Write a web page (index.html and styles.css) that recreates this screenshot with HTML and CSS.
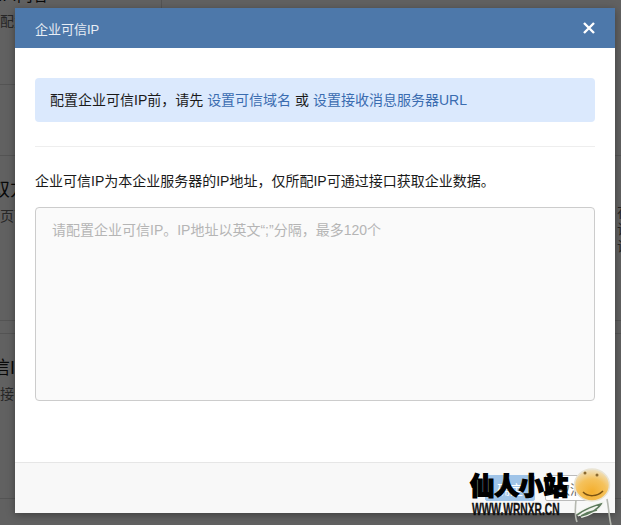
FILE: index.html
```html
<!DOCTYPE html>
<html lang="zh-CN">
  <head>
    <meta charset="utf-8">
    <title>企业可信IP</title>
    <link rel="stylesheet" href="styles.css">
  </head>
  <body>
    <div class="page">
      <div class="row row-top">
        <div class="cut-title">WIFI内容</div>
        <div class="row-sub">配置</div>
      </div>
      <div class="row row-gap"></div>
      <div class="row row-main">
        <div class="row-left">
          <div class="row-title">双方</div>
          <div class="row-sub">页面</div>
        </div>
        <div class="row-right">
          <div>在</div>
          <div>请</div>
          <div>设</div>
        </div>
      </div>
      <div class="row row-thin"></div>
      <div class="row row-main">
        <div class="row-left">
          <div class="row-title">信I</div>
          <div class="row-sub">接I</div>
        </div>
      </div>
    </div>

    <div class="mask"></div>

    <div class="dialog">
      <div class="dialog-head">
        <span class="dialog-title">企业可信IP</span>
        <svg class="close" width="12" height="12" viewBox="0 0 12 12">
          <path d="M1 1 L11 11 M11 1 L1 11" stroke="#fff" stroke-width="2.4" fill="none"/>
        </svg>
      </div>
      <div class="dialog-body">
        <div class="alert">配置企业可信IP前，请先 <a href="#">设置可信域名</a> 或 <a href="#">设置接收消息服务器URL</a></div>
        <div class="line"></div>
        <p class="desc">企业可信IP为本企业服务器的IP地址，仅所配IP可通过接口获取企业数据。</p>
        <textarea class="ip-input" placeholder="请配置企业可信IP。IP地址以英文“;”分隔，最多120个"></textarea>
      </div>
      <div class="dialog-foot">
        <button class="btn btn-ok">确定</button>
        <button class="btn">取消</button>
      </div>
    </div>

    <div class="mark">
      <div class="mark-name">仙人小站</div>
      <div class="mark-url">WWW.WRNXR.CN</div>
      <svg class="mark-face" width="42" height="60" viewBox="0 0 42 60">
        <defs>
          <radialGradient id="face" cx="0.5" cy="0.72" r="0.68">
            <stop offset="0" stop-color="#f4ae2c"/>
            <stop offset="0.6" stop-color="#f5c25c"/>
            <stop offset="1" stop-color="#efdfbb"/>
          </radialGradient>
        </defs>
        <path d="M4 33 C3 42 3 50 5 55 M35 32 C37 42 37 50 39 58" stroke="#b5b8b0" stroke-width="1.6" fill="none"/>
        <path d="M5 48 C13 42 24 38 29 37 C26 42 18 47 9 49 C14 46 20 44 25 43" stroke="#f2f4ee" stroke-width="4" fill="none"/>
        <path d="M5 48 C13 42 24 38 29 37 C26 42 18 47 9 49 C14 46 20 44 25 43" stroke="#5d7a5c" stroke-width="1.6" fill="none"/>
        <ellipse cx="20" cy="18" rx="17.5" ry="16" fill="url(#face)" stroke="#e9e4d4" stroke-width="1.5"/>
        <circle cx="13" cy="6" r="1.5" fill="#8a6a30"/>
        <circle cx="25" cy="8" r="1.5" fill="#8a6a30"/>
        <path d="M11 25 C16 30 25 30 31 24" stroke="#7b5312" stroke-width="1.5" fill="none"/>
      </svg>
    </div>
  </body>
</html>
```

FILE: styles.css
```css
* {
  box-sizing: border-box;
}

html, body {
  height: 100%;
  margin: 0;
  overflow: hidden;
}

body {
  position: relative;
  background: #fff;
  color: #1a1a1a;
  font-family: "Liberation Sans", "Noto Sans CJK SC", sans-serif;
  font-size: 14px;
}

/* page behind the dialog */
.page {
  height: 100%;
  overflow: hidden;
}

.row {
  border-bottom: 1px solid #ddd;
}

.row-top {
  height: 85px;
  width: 162px;
  border-right: 1px solid #ddd;
  overflow: hidden;
}

.row-gap {
  height: 71px;
}

.row-main {
  display: flex;
  justify-content: space-between;
  height: 165px;
  padding-top: 24px;
}

.row-thin {
  height: 13px;
}

.cut-title {
  margin: -15px 0 0 -17px;
  font-size: 16px;
  line-height: 22px;
}

.row-top .row-sub {
  margin: 4px 0 0;
}

.row-title {
  margin-left: -8px;
  font-size: 18px;
  line-height: 20px;
}

.row-sub {
  margin-top: 6px;
  color: #666;
  font-size: 14px;
  line-height: 20px;
}

.row-right {
  margin: 24px -10px 0 0;
  color: #666;
  font-size: 14px;
  line-height: 17px;
}

.mask {
  position: absolute;
  top: 0;
  right: 0;
  bottom: 0;
  left: 0;
  background: rgba(0, 0, 0, 0.62);
}

/* dialog */
.dialog {
  position: absolute;
  top: 8px;
  left: 15px;
  display: flex;
  flex-direction: column;
  width: 600px;
  height: 505px;
  background: #fff;
  box-shadow: 0 2px 8px rgba(0, 0, 0, 0.35);
}

.dialog-head {
  display: flex;
  align-items: center;
  justify-content: space-between;
  height: 40px;
  padding: 0 20px;
  background: #4d78aa;
  color: #e8eef5;
  font-size: 13px;
}

.dialog-body {
  flex: 1;
  padding: 30px 20px 0;
}

.alert {
  height: 44px;
  padding: 0 15px;
  border-radius: 4px;
  background: #dbe9fd;
  line-height: 44px;
}

.alert a {
  color: #3a6cb0;
  text-decoration: none;
}

.line {
  height: 1px;
  margin-top: 24px;
  background: #eee;
}

.desc {
  margin: 24px 0 16px;
  line-height: 20px;
}

.ip-input {
  display: block;
  width: 100%;
  height: 194px;
  padding: 12px 16px;
  border: 1px solid #ccc;
  border-radius: 4px;
  outline: none;
  background: #fafafa;
  font: inherit;
  line-height: 20px;
  resize: none;
}

.ip-input::placeholder {
  color: #b5b5b5;
  opacity: 1;
}

.dialog-foot {
  display: flex;
  justify-content: flex-end;
  gap: 10px;
  height: 51px;
  padding: 12px 20px;
  border-top: 1px solid #e6e6e6;
  background: #f8f8f8;
}

.btn {
  width: 50px;
  height: 26px;
  padding: 0;
  border: 1px solid #bbb;
  border-radius: 2px;
  background: #fff;
  color: #666;
  font: inherit;
  font-size: 13px;
}

.btn-ok {
  border-color: #a0c4e8;
  background: #a0c4e8;
  color: #fff;
}

/* watermark over the corner */
.mark {
  position: absolute;
  top: 467px;
  left: 470px;
  width: 140px;
  height: 58px;
}

.mark-name {
  position: absolute;
  top: 6px;
  left: 0;
  color: #000;
  font-size: 24.5px;
  font-weight: 900;
  line-height: 28px;
  white-space: nowrap;
  -webkit-text-stroke: 1.4px #000;
}

.mark-url {
  position: absolute;
  top: 36px;
  left: 2px;
  color: #111;
  font-size: 16px;
  font-weight: 700;
  line-height: 14px;
  transform: scaleX(0.64);
  transform-origin: left center;
  white-space: nowrap;
  -webkit-text-stroke: 0.4px #111;
}

.mark-face {
  position: absolute;
  top: 0;
  left: 102px;
}
```
